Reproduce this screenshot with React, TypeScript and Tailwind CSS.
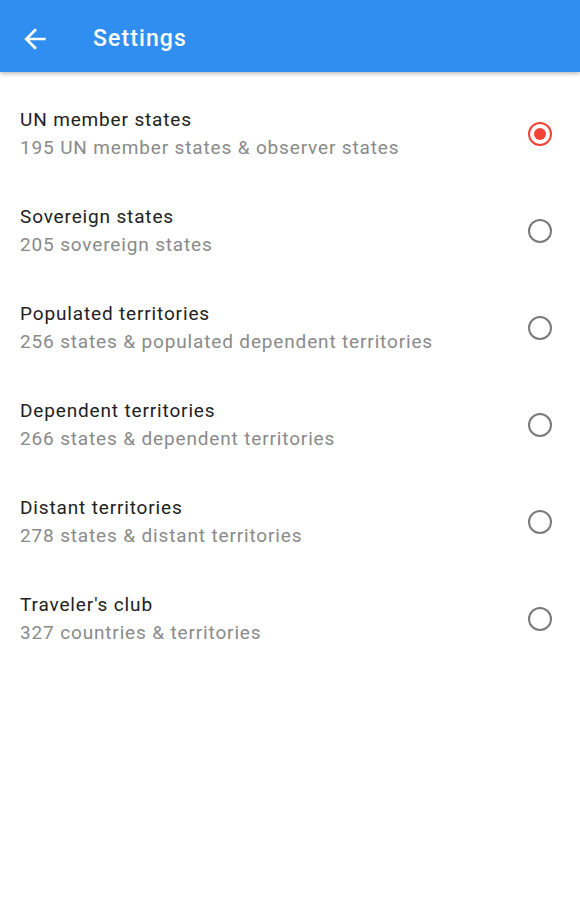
import React, { useState } from 'react';

const options = [
  { title: 'UN member states', subtitle: '195 UN member states & observer states' },
  { title: 'Sovereign states', subtitle: '205 sovereign states' },
  { title: 'Populated territories', subtitle: '256 states & populated dependent territories' },
  { title: 'Dependent territories', subtitle: '266 states & dependent territories' },
  { title: 'Distant territories', subtitle: '278 states & distant territories' },
  { title: "Traveler's club", subtitle: '327 countries & territories' },
];

const App: React.FC = () => {
  const [selected, setSelected] = useState(0);

  return (
    <div className="min-h-screen bg-white font-['Roboto',sans-serif]">
      {/* App bar */}
      <header className="relative z-10 flex h-[72px] items-center bg-[#2f8ef0] pt-[6px] shadow-[0_2px_4px_rgba(0,0,0,0.25)]">
        <button className="ml-[19px] flex h-8 w-8 items-center justify-center text-white">
          <svg width="32" height="32" viewBox="0 0 24 24" fill="currentColor">
            <path d="M20 11H7.83l5.59-5.59L12 4l-8 8 8 8 1.41-1.41L7.83 13H20v-2z" />
          </svg>
        </button>
        <h1 className="ml-[42px] text-[23px] font-medium tracking-[1.1px] text-white">Settings</h1>
      </header>

      {/* Options */}
      <main className="pt-[13px]">
        {options.map((o, i) => (
          <div
            key={o.title}
            onClick={() => setSelected(i)}
            className="flex h-[97px] cursor-pointer items-center justify-between pl-5 pr-[28px]"
          >
            <div className="flex flex-col tracking-[0.85px]">
              <span className="text-[19px] leading-[28px] text-[#212121]">{o.title}</span>
              <span className="text-[19px] leading-[28px] text-[#8a8a8a]">{o.subtitle}</span>
            </div>
            {selected === i ? (
              <div className="flex h-6 w-6 items-center justify-center rounded-full border-[2.5px] border-[#f44336]">
                <div className="h-3 w-3 rounded-full bg-[#f44336]" />
              </div>
            ) : (
              <div className="h-6 w-6 rounded-full border-[2.5px] border-[#7a7a7a]" />
            )}
          </div>
        ))}
      </main>
    </div>
  );
};

export default App;
